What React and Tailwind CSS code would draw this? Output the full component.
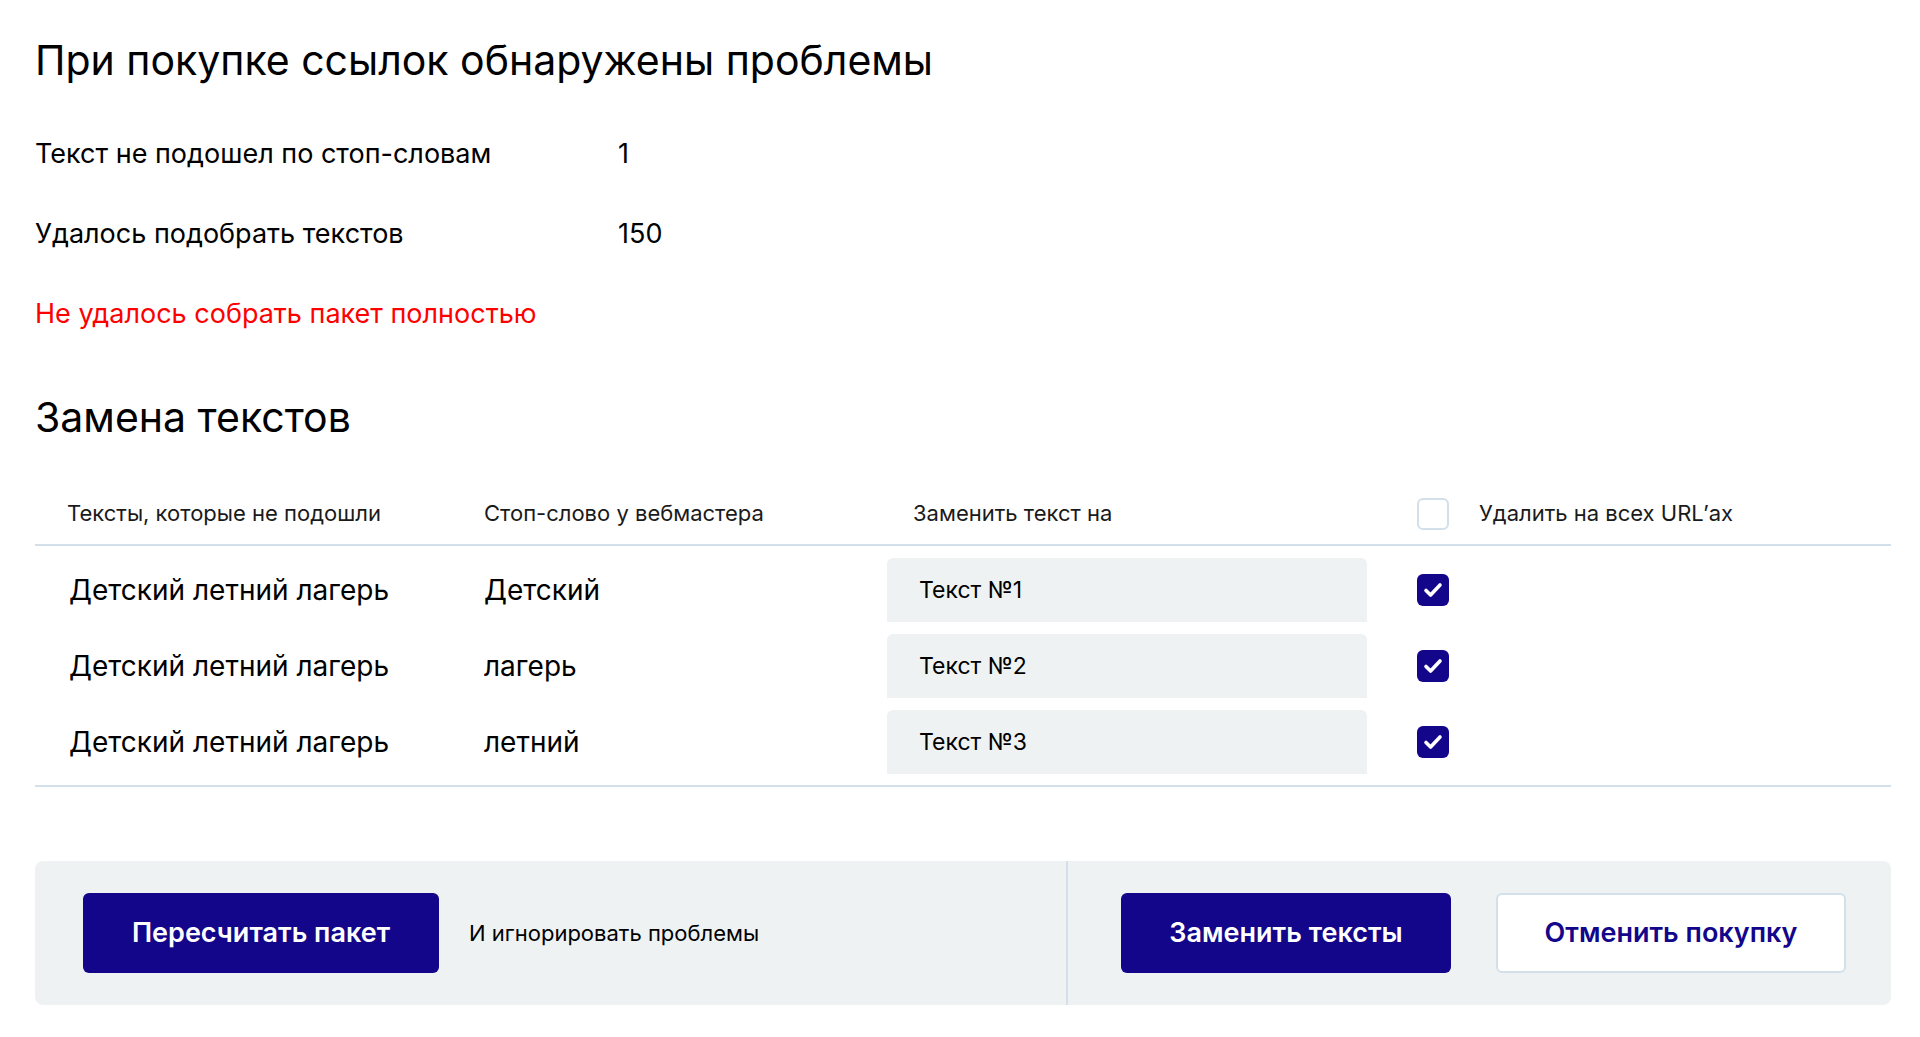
import React from 'react';

const rows = [
  { text: 'Детский летний лагерь', stop: 'Детский', value: 'Текст №1' },
  { text: 'Детский летний лагерь', stop: 'лагерь', value: 'Текст №2' },
  { text: 'Детский летний лагерь', stop: 'летний', value: 'Текст №3' },
];

function Checkbox({ checked }) {
  if (!checked) {
    return <span className="block w-8 h-8 rounded-md border-2 border-[#d3e0ea] bg-white" />;
  }
  return (
    <span className="flex items-center justify-center w-8 h-8 rounded-md bg-[#13068a]">
      <svg width="32" height="32" viewBox="0 0 32 32" fill="none">
        <path d="M9 16.5l4.6 4.6L23 11" stroke="#fff" strokeWidth="3.6" strokeLinecap="round" strokeLinejoin="round" />
      </svg>
    </span>
  );
}

export default function App() {
  return (
    <div className="min-h-[1037px] bg-white text-black pl-[35px] pr-[29px] pt-[35px] font-['Inter',sans-serif]">
      {/* Problems summary */}
      <h1 className="text-[41px] leading-[50px] font-normal">При покупке ссылок обнаружены проблемы</h1>

      <div className="mt-[53px] flex flex-col gap-[48px] text-[27px] leading-[32px]">
        <div className="flex">
          <span className="w-[583px]">Текст не подошел по стоп-словам</span>
          <span>1</span>
        </div>
        <div className="flex">
          <span className="w-[583px]">Удалось подобрать текстов</span>
          <span>150</span>
        </div>
        <div className="text-[#ff0000]">Не удалось собрать пакет полностью</div>
      </div>

      {/* Replace texts */}
      <h2 className="mt-[63px] text-[41px] leading-[48px] font-normal">Замена текстов</h2>

      <div className="mt-[42px]">
        <div className="flex items-center h-[63px] border-b-2 border-[#d3e0ea] text-[22px] text-[#1a1a1a]">
          <span className="w-[449px] pl-8">Тексты, которые не подошли</span>
          <span className="w-[403px]">Стоп-слово у вебмастера</span>
          <span className="w-[480px] pl-[26px]">Заменить текст на</span>
          <span className="ml-[50px]"><Checkbox /></span>
          <span className="ml-[30px]">Удалить на всех URL’ах</span>
        </div>

        <div className="flex flex-col gap-3 pt-3 pb-[11px] border-b-2 border-[#d3e0ea]">
          {rows.map((r, i) => (
            <div key={i} className="flex items-center h-16">
              <span className="w-[449px] pl-[34px] text-[28px]">{r.text}</span>
              <span className="w-[403px] text-[28px]">{r.stop}</span>
              <div className="w-[480px] h-16 flex items-center pl-8 bg-[#eef2f3] rounded-t-md text-[23px]">
                {r.value}
              </div>
              <span className="ml-[50px]"><Checkbox checked /></span>
            </div>
          ))}
        </div>
      </div>

      {/* Actions */}
      <div className="mt-[74px] flex h-[144px] rounded-lg bg-[#eef2f3]">
        <div className="flex items-center w-[1033px] pl-12 border-r-2 border-[#d3e0ea]">
          <button className="w-[356px] h-20 rounded-md bg-[#13068a] text-white text-[27px] font-semibold">
            Пересчитать пакет
          </button>
          <span className="ml-[30px] text-[22px]">И игнорировать проблемы</span>
        </div>
        <div className="flex items-center pl-[53px] gap-[45px]">
          <button className="w-[330px] h-20 rounded-md bg-[#13068a] text-white text-[27px] font-semibold">
            Заменить тексты
          </button>
          <button className="w-[350px] h-20 rounded-md bg-white border-2 border-[#d3e0ea] text-[#13068a] text-[27px] font-semibold">
            Отменить покупку
          </button>
        </div>
      </div>
    </div>
  );
}
